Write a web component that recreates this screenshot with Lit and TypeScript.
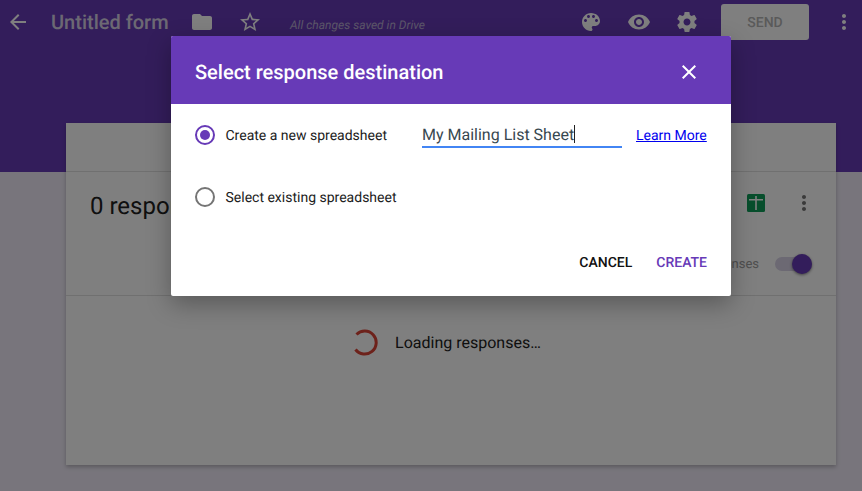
import { LitElement, html, css, svg } from "lit";
import { customElement } from "lit/decorators.js";

const icon = (d: string, size = 24) =>
  html`<svg width=${size} height=${size} viewBox="0 0 24 24" fill="currentColor">${svg`<path d=${d}></path>`}</svg>`;

const ARROW = "M20 11H7.83l5.59-5.59L12 4l-8 8 8 8 1.41-1.41L7.83 13H20v-2z";
const FOLDER = "M10 4H4c-1.1 0-2 .9-2 2v12c0 1.1.9 2 2 2h16c1.1 0 2-.9 2-2V8c0-1.1-.9-2-2-2h-8l-2-2z";
const STAR = "M22 9.24l-7.19-.62L12 2 9.19 8.63 2 9.24l5.46 4.73L5.82 21 12 17.27 18.18 21l-1.63-7.03L22 9.24zM12 15.4l-3.76 2.27 1-4.28-3.32-2.88 4.38-.38L12 6.1l1.71 4.04 4.38.38-3.32 2.88 1 4.28L12 15.4z";
const PALETTE = "M12 3c-4.97 0-9 4.03-9 9s4.03 9 9 9c.83 0 1.5-.67 1.5-1.5 0-.39-.15-.74-.39-1.01-.23-.26-.38-.61-.38-.99 0-.83.67-1.5 1.5-1.5H16c2.76 0 5-2.24 5-5 0-4.42-4.03-8-9-8zm-5.5 9c-.83 0-1.5-.67-1.5-1.5S5.67 9 6.5 9 8 9.67 8 10.5 7.33 12 6.5 12zm3-4C8.67 8 8 7.33 8 6.5S8.67 5 9.5 5s1.5.67 1.5 1.5S10.33 8 9.5 8zm5 0c-.83 0-1.5-.67-1.5-1.5S13.67 5 14.5 5s1.5.67 1.5 1.5S15.33 8 14.5 8zm3 4c-.83 0-1.5-.67-1.5-1.5S16.67 9 17.5 9s1.5.67 1.5 1.5-.67 1.5-1.5 1.5z";
const EYE = "M12 4.5C7 4.5 2.73 7.61 1 12c1.73 4.39 6 7.5 11 7.5s9.27-3.11 11-7.5c-1.73-4.39-6-7.5-11-7.5zM12 17c-2.76 0-5-2.24-5-5s2.24-5 5-5 5 2.24 5 5-2.24 5-5 5zm0-8c-1.66 0-3 1.34-3 3s1.34 3 3 3 3-1.34 3-3-1.34-3-3-3z";
const GEAR = "M19.43 12.98c.04-.32.07-.64.07-.98s-.03-.66-.07-.98l2.11-1.65c.19-.15.24-.42.12-.64l-2-3.46c-.12-.22-.39-.3-.61-.22l-2.49 1c-.52-.4-1.08-.73-1.69-.98l-.38-2.65C14.46 2.18 14.25 2 14 2h-4c-.25 0-.46.18-.49.42l-.38 2.65c-.61.25-1.17.59-1.69.98l-2.49-1c-.23-.09-.49 0-.61.22l-2 3.46c-.13.22-.07.49.12.64l2.11 1.65c-.04.32-.07.65-.07.98s.03.66.07.98l-2.11 1.65c-.19.15-.24.42-.12.64l2 3.46c.12.22.39.3.61.22l2.49-1c.52.4 1.08.73 1.69.98l.38 2.65c.03.24.24.42.49.42h4c.25 0 .46-.18.49-.42l.38-2.65c.61-.25 1.17-.59 1.69-.98l2.49 1c.23.09.49 0 .61-.22l2-3.46c.12-.22.07-.49-.12-.64l-2.11-1.65zM12 15.5c-1.93 0-3.5-1.57-3.5-3.5s1.57-3.5 3.5-3.5 3.5 1.57 3.5 3.5-1.57 3.5-3.5 3.5z";
const DOTS = "M12 8c1.1 0 2-.9 2-2s-.9-2-2-2-2 .9-2 2 .9 2 2 2zm0 2c-1.1 0-2 .9-2 2s.9 2 2 2 2-.9 2-2-.9-2-2-2zm0 6c-1.1 0-2 .9-2 2s.9 2 2 2 2-.9 2-2-.9-2-2-2z";
const CLOSE = "M19 6.41L17.59 5 12 10.59 6.41 5 5 6.41 10.59 12 5 17.59 6.41 19 12 13.41 17.59 19 19 17.59 13.41 12z";

@customElement("app-root")
export class AppRoot extends LitElement {
  static styles = css`
    :host {
      display: block;
      position: relative;
      width: 862px;
      height: 491px;
      overflow: hidden;
      font-family: Roboto, "Liberation Sans", sans-serif;
      text-rendering: geometricPrecision;
      background: linear-gradient(#673ab7 0 172px, #f0ebf8 172px);
    }
    .topbar {
      display: flex;
      align-items: center;
      height: 44px;
      color: #fff;
    }
    .btn { display: flex; flex: none; }
    .back { margin-left: 6px; }
    .title {
      margin-left: 21px;
      width: 139px;
      font-size: 20px;
      font-weight: 500;
      color: #d8d2e6;
    }
    .star { margin-left: 24px; }
    .saved {
      margin-left: 28px;
      width: 289px;
      padding-top: 5px;
      font-size: 12px;
      font-style: italic;
      color: #b9add4;
    }
    .ic-gap { margin-left: 24px; }
    .send {
      flex: none;
      box-sizing: border-box;
      margin-left: 22px;
      width: 88px;
      height: 36px;
      padding-top: 2px;
      border-radius: 3px;
      background: #fff;
      color: #b5b5b5;
      display: flex;
      align-items: center;
      justify-content: center;
      font-size: 14px;
      font-weight: 500;
    }
    .more { margin-left: 23px; }
    .card {
      margin: 79px 26px 0 66px;
      height: 342px;
      background: #fff;
      box-shadow: 0 2px 4px rgba(0,0,0,.25);
      display: flex;
      flex-direction: column;
    }
    .tabs {
      height: 48px;
      flex: none;
      border-bottom: 1px solid #e0e0e0;
    }
    .summary {
      height: 124px;
      flex: none;
      box-sizing: border-box;
      border-bottom: 1px solid #e0e0e0;
      display: flex;
      flex-direction: column;
    }
    .sumtop {
      display: flex;
      align-items: center;
      height: 62px;
      padding: 0 20px 0 24px;
    }
    .count { flex: 1; font-size: 24px; color: #212121; padding-top: 6px; }
    .sheets { display: flex; margin-right: 27px; }
    .dots-dark { display: flex; color: #757575; }
    .accept {
      display: flex;
      align-items: center;
      justify-content: flex-end;
      gap: 16px;
      padding-right: 24px;
      height: 60px;
      font-size: 13px;
      color: #9e9e9e;
    }
    .toggle { position: relative; width: 37px; height: 14px; border-radius: 7px; background: #d8d2e6; }
    .knob {
      position: absolute;
      right: 0;
      top: -3px;
      width: 20px;
      height: 20px;
      border-radius: 50%;
      background: #673ab7;
      box-shadow: 0 1px 3px rgba(0,0,0,.5);
    }
    .loading {
      display: flex;
      align-items: center;
      justify-content: center;
      gap: 17px;
      margin-top: 32px;
      margin-right: 11px;
      font-size: 16px;
      color: #212121;
    }
    .scrim { position: absolute; inset: 0; background: rgba(0,0,0,.5); }
    .dialog {
      position: absolute;
      left: 171px;
      top: 36px;
      width: 560px;
      height: 260px;
      background: #fff;
      border-radius: 2px;
      overflow: hidden;
      box-shadow: 0 8px 24px rgba(0,0,0,.3);
      display: flex;
      flex-direction: column;
    }
    .dhead {
      flex: none;
      box-sizing: border-box;
      height: 68px;
      background: #673ab7;
      color: #fff;
      display: flex;
      align-items: center;
      justify-content: space-between;
      padding: 4px 30px 0 24px;
    }
    .dtitle { font-size: 20px; font-weight: 500; }
    .opts { padding: 16px 24px 0; display: flex; flex-direction: column; }
    .opt {
      display: flex;
      align-items: center;
      height: 30px;
      font-size: 14px;
      color: #212121;
    }
    .opt + .opt { margin-top: 32px; }
    .radio {
      flex: none;
      box-sizing: border-box;
      width: 20px;
      height: 20px;
      border-radius: 50%;
      border: 2px solid #757575;
      margin-right: 10.5px;
      display: flex;
      align-items: center;
      justify-content: center;
    }
    .radio.on { border-color: #673ab7; }
    .radio.on::after { content: ""; width: 10px; height: 10px; border-radius: 50%; background: #673ab7; }
    .optlabel { width: 196.5px; flex: none; padding-top: 2px; }
    .field {
      flex: none;
      box-sizing: border-box;
      align-self: flex-start;
      width: 200px;
      height: 28px;
      border-bottom: 2px solid #4285f4;
      display: flex;
      align-items: center;
      font-size: 16px;
      color: #37474f;
      padding-top: 2px;
    }
    .caret { width: 1px; height: 18px; background: #212121; }
    .learn { flex: none; margin-left: 14px; padding-top: 2px; font-size: 14px; color: #0000ee; text-decoration: underline; white-space: nowrap; }
    .actions {
      margin-top: auto;
      box-sizing: border-box;
      height: 68px;
      display: flex;
      align-items: center;
      justify-content: flex-end;
      gap: 24px;
      padding: 2px 24px 0 0;
      font-size: 14px;
      font-weight: 500;
      color: #111;
    }
    .create { color: #673ab7; }
  `;

  render() {
    return html`
      <div class="topbar">
        <span class="btn back">${icon(ARROW)}</span>
        <span class="title">Untitled form</span>
        <span class="btn">${icon(FOLDER)}</span>
        <span class="btn star">${icon(STAR)}</span>
        <span class="saved">All changes saved in Drive</span>
        <span class="btn">${icon(PALETTE)}</span>
        <span class="btn ic-gap">${icon(EYE)}</span>
        <span class="btn ic-gap">${icon(GEAR)}</span>
        <span class="send">SEND</span>
        <span class="btn more">${icon(DOTS)}</span>
      </div>
      <div class="card">
        <div class="tabs"></div>
        <div class="summary">
          <div class="sumtop">
            <span class="count">0 responses</span>
            <span class="sheets">
              <svg width="18" height="18" viewBox="0 0 18 18">
                <rect width="18" height="18" rx="1.5" fill="#0f9d58"></rect>
                <path d="M8.2 2h1.6v3h6.2v1.5H9.8V16H8.2V6.5H2V5h6.2z" fill="#fff"></path>
              </svg>
            </span>
            <span class="dots-dark">${icon(DOTS)}</span>
          </div>
          <div class="accept">
            <span>Accepting responses</span>
            <span class="toggle"><span class="knob"></span></span>
          </div>
        </div>
        <div class="loading">
          <svg width="28" height="28" viewBox="0 0 28 28">
            <path d="M6.5 6.5 A11.5 11.5 0 1 1 5.5 21.5" fill="none" stroke="#db4437" stroke-width="3"></path>
          </svg>
          <span>Loading responses…</span>
        </div>
      </div>
      <div class="scrim"></div>
      <div class="dialog">
        <div class="dhead">
          <span class="dtitle">Select response destination</span>
          <span class="btn">${icon(CLOSE)}</span>
        </div>
        <div class="opts">
          <div class="opt">
            <span class="radio on"></span>
            <span class="optlabel">Create a new spreadsheet</span>
            <span class="field">My Mailing List Sheet<span class="caret"></span></span>
            <a class="learn">Learn More</a>
          </div>
          <div class="opt">
            <span class="radio"></span>
            <span class="optlabel">Select existing spreadsheet</span>
          </div>
        </div>
        <div class="actions">
          <span>CANCEL</span>
          <span class="create">CREATE</span>
        </div>
      </div>
    `;
  }
}
